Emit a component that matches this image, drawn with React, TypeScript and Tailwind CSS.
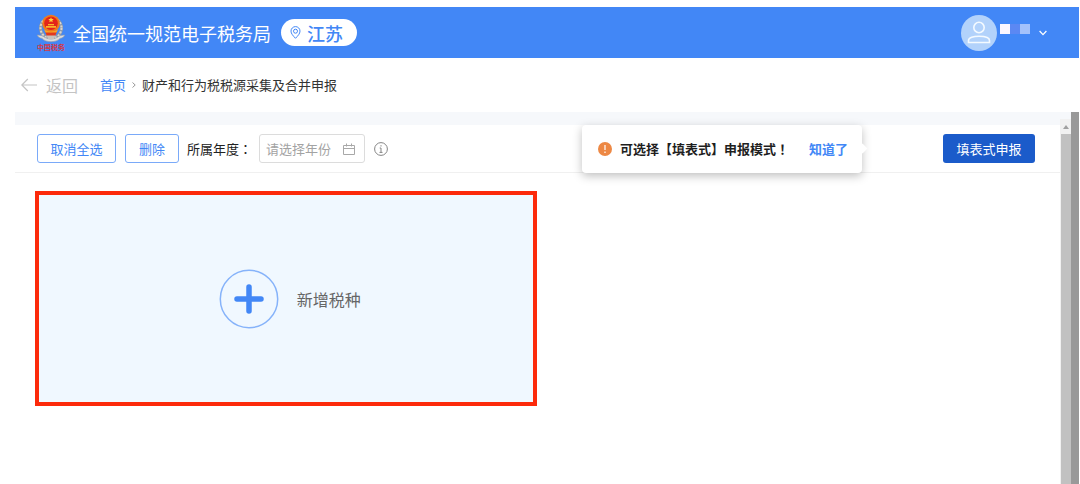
const Emblem = () => {
  return (
    <svg className="h-[38px] w-7 shrink-0" viewBox="0 0 28 38" aria-hidden="true">
      <circle cx="14" cy="14" r="10.5" fill="none" stroke="#8f99a8" strokeWidth="3" />
      <circle cx="14" cy="14" r="10.5" fill="none" stroke="#d9d5cf" strokeWidth="2" strokeDasharray="2 1.5" />
      <path d="M0 21c3.500 0 6 .8 8 2.500 2 1 4 1.500 6 1.500s4-.5 6-1.500c2-1.700 4.500-2.500 8-2.500-1 2-2.500 3-5 3.400-2 2.100-5 3.300-9 3.300s-7-1.200-9-3.300C2.500 24 1 23 0 21z" fill="#dcdcdc" stroke="#8d97a6" strokeWidth=".6" />
      <path d="M9 20h10l-2 5h-6z" fill="#c9c2bb" />
      <path d="M8 17h12l-1.500 4.500h-9z" fill="#e2381f" />
      <circle cx="14" cy="9.500" r="8.800" fill="#f07a1c" />
      <circle cx="14" cy="9.200" r="6.800" fill="#e3231a" />
      <path d="M14 3.200l.8 1.700 1.900.2-1.400 1.300.4 1.800-1.700-.9-1.700.9.400-1.800-1.400-1.300 1.900-.2z" fill="#ffd23c" />
      <path d="M9 12h10v1.800H9zM11 10h6v1.300h-6z" fill="#f9b52c" />
      <path d="M7 15.500c4 2.500 10 2.500 14 0l-1.500 3h-11z" fill="#f7a325" />
      <text x="14" y="36" textAnchor="middle" fontSize="7" fontWeight="700" fontFamily="'Noto Sans CJK SC', sans-serif" fill="#d3394a">
        中国税务
      </text>
    </svg>
  );
};

const Header = () => {
  return (
    <header className="flex h-[51px] shrink-0 items-center bg-[#4287f6] pr-8 pl-[22px] text-white">
      <Emblem />
      <h1 className="ml-2 text-[18px] leading-6">全国统一规范电子税务局</h1>
      <button type="button" className="ml-[10px] flex h-[27px] items-center rounded-full bg-white pr-[14px] pl-[9px] text-[18px] leading-6 font-medium text-[#4287f6]">
        <svg className="mr-[6px] h-[13px] w-[11px]" viewBox="0 0 11 13" fill="none" stroke="currentColor">
          <path d="M5.500 12.300C3 9.700 1 7.600 1 5.100a4.500 4.500 0 0 1 9 0c0 2.500-2 4.600-4.500 7.200z" />
          <circle cx="5.500" cy="5.200" r="2" />
        </svg>
        江苏
      </button>
      <button type="button" aria-label="用户菜单" className="ml-auto flex items-center">
        <span className="flex h-9 w-9 items-center justify-center rounded-full bg-[#b2d2fb]">
          <svg className="h-[23px] w-6" viewBox="0 0 24 23" fill="none" stroke="#f4faff" strokeWidth="1.600">
            <circle cx="12" cy="6.500" r="5.200" />
            <path d="M1.500 21.500v-2c0-3 5-4.300 10.500-4.300s10.500 1.300 10.500 4.300v2z" />
          </svg>
        </span>
        <span className="mb-2 ml-[3px] flex">
          <span className="h-[10px] w-[10px] bg-[#fbf7ff]" />
          <span className="h-[10px] w-[10px] bg-[#5b88f3]" />
          <span className="h-[10px] w-[10px] bg-[#a3c1fb]" />
        </span>
        <svg className="ml-[9px] h-[6px] w-2" viewBox="0 0 8 6" fill="none" stroke="currentColor" strokeWidth="1.300">
          <path d="M.6 1l3.400 3.600L7.400 1" />
        </svg>
      </button>
    </header>
  );
};

const Breadcrumb = () => {
  return (
    <nav className="flex h-[54px] shrink-0 items-center pl-[6px] text-[13px] leading-5">
      <a href="#back" className="flex items-center text-[16px] text-[#c4c4c4]">
        <svg className="mr-[9px] h-[14px] w-4" viewBox="0 0 16 14" fill="none" stroke="currentColor" strokeWidth="1.200">
          <path d="M16 7H.8M6.800 1l-6 6 6 6" />
        </svg>
        返回
      </a>
      <a href="#home" className="ml-[22px] text-[#4287f6]">首页</a>
      <svg className="mx-[6px] h-[6px] w-1" viewBox="0 0 4 6" fill="none" stroke="#999">
        <path d="M.5.5L3.200 3 .5 5.500" />
      </svg>
      <span className="text-[#333]">财产和行为税税源采集及合并申报</span>
    </nav>
  );
};

const ModeTip = () => {
  return (
    <div className="absolute right-full mr-[81px] flex h-12 w-[280px] items-center rounded-[4px] bg-white pr-[14px] pl-4 text-[13px] leading-5 font-bold whitespace-nowrap shadow-[0_3px_10px_rgba(0,0,0,0.25)]">
      <span className="absolute -right-1 h-[7px] w-[7px] rotate-45 bg-white" />
      <svg className="mr-2 h-[14px] w-[14px] shrink-0" viewBox="0 0 14 14">
        <circle cx="7" cy="7" r="7" fill="#ed8844" />
        <path d="M7 3v5M7 9.500V11" stroke="#fff" strokeWidth="1.200" />
      </svg>
      <span className="text-[#1f1f1f]">
        可选择【填表式】申报模式<span className="font-['Noto_Sans_CJK_TC',sans-serif]" lang="zh-TW">！</span>
      </span>
      <button type="button" className="ml-auto text-[#4287f6]">知道了</button>
    </div>
  );
};

const Toolbar = () => {
  return (
    <div className="flex h-12 items-center border-b border-[#f0f0f0] pr-[25px] pl-[22px] text-[13px] leading-5">
      <button type="button" className="h-[29px] w-[79px] rounded-[3px] border border-[#7aaaf9] text-[#4287f6]">取消全选</button>
      <button type="button" className="ml-[9px] h-[29px] w-[54px] rounded-[3px] border border-[#7aaaf9] text-[#4287f6]">删除</button>
      <label htmlFor="year" className="ml-2 w-[72px] whitespace-nowrap text-[#222]">
        所属年度<span className="font-['Noto_Sans_CJK_TC',sans-serif]" lang="zh-TW">：</span>
      </label>
      <div className="flex h-[29px] w-[106px] items-center rounded-[3px] border border-[#dcdcdc] pr-[9px] pl-[6px]">
        <input id="year" type="text" placeholder="请选择年份" className="min-w-0 flex-1 text-[13px] outline-none placeholder:text-[#a3a3a3]" />
        <svg className="h-3 w-3 shrink-0" viewBox="0 0 12 12" fill="none" stroke="#a8a8a8">
          <path d="M.5 2.500h11v9H.5zM.5 5.500h11M3.500.5v3M8.500.5v3" />
        </svg>
      </div>
      <svg className="ml-[9px] h-[14px] w-[14px]" viewBox="0 0 14 14" fill="none" stroke="#858585">
        <circle cx="7" cy="7" r="6.400" />
        <path d="M7 3.200v1.300M5.700 6H7v4.400M5.500 10.400h3" />
      </svg>
      <div className="relative ml-auto flex items-center">
        <ModeTip />
        <button type="button" className="h-[29px] w-[92px] rounded-[3px] bg-[#1b5bca] text-white">填表式申报</button>
      </div>
    </div>
  );
};

const AddTaxCard = () => {
  return (
    <button type="button" className="mt-[18px] ml-5 flex h-[215px] w-[48%] items-center justify-center border-4 border-[#fc2a0b] bg-[#f0f8ff] pl-2 text-[16px] leading-6 text-[#666]">
      <svg className="mr-[18px] h-[60px] w-[60px]" viewBox="0 0 60 60" fill="none">
        <circle cx="30" cy="30" r="28.700" stroke="#86b3fa" strokeWidth="1.500" />
        <path d="M30 18v24M18 30h24" stroke="#4287f6" strokeWidth="5.500" strokeLinecap="round" />
      </svg>
      新增税种
    </button>
  );
};

const App = () => {
  return (
    <div className="flex min-h-screen flex-col bg-white pt-[7px] pr-px pl-[15px] font-['Noto_Sans_CJK_SC',sans-serif]">
      <Header />
      <Breadcrumb />
      <div className="flex flex-1">
        <main className="min-w-0 flex-1">
          <div className="h-[13px] bg-[#f6f8fb]" />
          <Toolbar />
          <AddTaxCard />
        </main>
        <div className="flex w-[11px] flex-col bg-[#f1f1f1]">
          <div className="h-[7px] bg-[#f6f8fb]" />
          <div className="flex h-[15px] items-center justify-center">
            <svg className="h-1 w-[6px]" viewBox="0 0 6 4" fill="#a0a0a0">
              <path d="M3 0l3 4H0z" />
            </svg>
          </div>
          <div className="ml-px flex-1 bg-[#c1c1c1]" />
        </div>
        <div className="w-2 bg-[#999]" />
      </div>
    </div>
  );
};

export default App;
